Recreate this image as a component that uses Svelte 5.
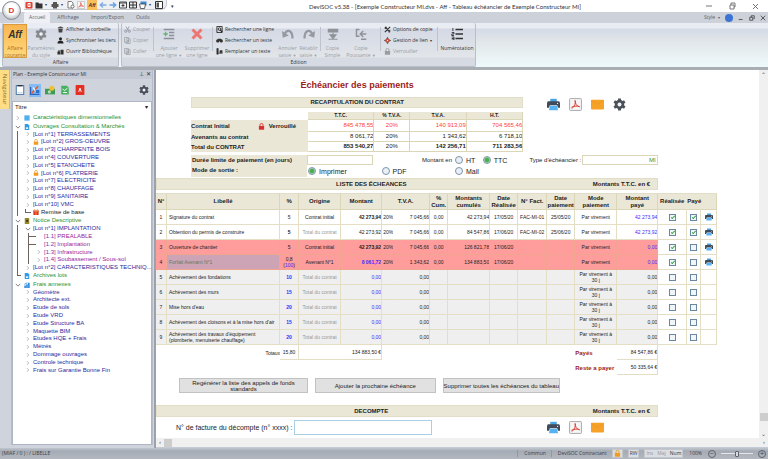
<script>
  const quick = ['app', 'folder', 'printer', 'page', 'pdf', 'aff', 'left', 'right', 'win', 'split', 'tray', 'side'];
  const tabs = ['Accueil', 'Affichage', 'Import/Export', 'Outils'];

  const lots = [
    { t: '[Lot n°1] TERRASSEMENTS' },
    { t: '[Lot n°2] GROS-OEUVRE', lock: true },
    { t: '[Lot n°3] CHARPENTE BOIS' },
    { t: '[Lot n°4] COUVERTURE' },
    { t: '[Lot n°5] ETANCHEITE' },
    { t: '[Lot n°6] PLATRERIE', lock: true },
    { t: '[Lot n°7] ELECTRICITE' },
    { t: '[Lot n°8] CHAUFFAGE' },
    { t: '[Lot n°9] SANITAIRE' },
    { t: '[Lot n°10] VMC' }
  ];
  const notice = [
    { t: '[1.1] PREALABLE', leaf: true },
    { t: '[1.2] Implantation', leaf: true },
    { t: '[1.3] Infrastructure' },
    { t: '[1.4] Soubassement / Sous-sol' }
  ];
  const frais = ['Géomètre', 'Architecte ext.', 'Etude de sols', 'Etude VRD', 'Etude Structure BA', 'Maquette BIM',
    'Etudes HQE + Frais', 'Métrés', 'Dommage ouvrages', 'Controle technique', 'Frais sur Garantie Bonne Fin'];

  const recap = [
    { label: 'Contrat Initial', lock: true, v: ['845 478,55', '20%', '140 913,09', '704 565,46'], cls: 'red' },
    { label: 'Avenants au contrat', v: ['8 061,72', '20%', '1 343,62', '6 718,10'], cls: '' },
    { label: 'Total du CONTRAT', v: ['853 540,27', '20%', '142 256,71', '711 283,56'], cls: 'total' }
  ];

  const cols = [11, 113, 19, 42, 41, 12, 36, 18, 42, 28, 29, 28, 42, 41, 29, 14, 16];
  const full = cols.reduce((a, b) => a + b, 0);

  let rows = $state([
    { n: 1, l: 'Signature du contrat', p: '5', o: 'Contrat initial', m: '42 273,94', b: true, tv: '7 045,66', cu: '42 273,94', d: '17/05/20', f: 'FAC-MI-01', dp: '25/05/20', pay: '42 273,94', r: true, y: true },
    { n: 2, l: 'Obtention du permis de construire', p: '5', pb: true, o: 'Total du contrat', m: '42 273,92', tv: '7 045,66', cu: '84 547,86', d: '17/06/20', f: 'FAC-MI-02', dp: '25/06/20', pay: '42 273,92', r: true, y: true },
    { n: 3, l: 'Ouverture de chantier', p: '5', o: 'Contrat initial', m: '42 273,92', b: true, tv: '7 045,66', cu: '126 821,78', d: '17/06/20', f: '', dp: '', pay: '0,00', r: true, y: false, k: 'late' },
    { n: 4, l: 'Forfait Avenant N°1', p: '0,8', sub: '100', o: 'Avenant N°1', m: '8 061,72', b: true, blue: true, tv: '1 343,62', cu: '134 883,50', d: '17/06/20', f: '', dp: '', pay: '0,00', r: true, y: false, k: 'late', sel: true },
    ...[
      [5, 'Achèvement des fondations', '10'],
      [6, 'Achèvement des murs', '15'],
      [7, "Mise hors d'eau", '20'],
      [8, "Achèvement des cloisons et à la mise hors d'air", '15'],
      [9, "Achèvement des travaux d'équipement (plomberie, menuiserie chauffage)", '20']
    ].map(([n, l, p]) => ({ n, l, p, o: 'Total du contrat', m: '0,00', blue: true, tv: '0,00', cu: '', d: '', f: '', dp: '', pay: '0,00', r: false, y: false, k: 'todo' }))
  ]);

  let sortie = $state('Imprimer');
  let base = $state('TTC');
</script>

{#snippet icon(name)}
  <svg class="ic" viewBox="0 0 16 16" aria-hidden="true">
    {#if name === 'printer'}
      <path d="M4 1h8v4H4z" fill="#4aa3e0" /><path d="M1 4h14l1 2v6h-2.500l-1-3h-9l-1 3H0V6z" fill="#414a56" /><path d="M3.500 9.500h9l1 5.500H2.500z" fill="#58b2f0" /><circle cx="13" cy="6.500" r=".8" fill="#fff" />
    {:else if name === 'pdf'}
      <rect x=".7" y=".7" width="14.600" height="14.600" rx="1" fill="#f6f6f6" stroke="#999" /><path d="M3.500 13C7 10 8.500 6 7.500 3M7.500 3c0 4 2 7 5.500 8M3 11.500c3-1.500 6-2 10-1" fill="none" stroke="#d93a30" stroke-width="1.200" />
    {:else if name === 'mail'}
      <rect y="2" width="16" height="12" rx="1" fill="#f6a127" /><path d="M0 3l8 5 8-5" fill="none" stroke="#f0981c" />
    {:else if name === 'gear'}
      <path d="M8 .5v15M1.500 4.250l13 7.500M14.500 4.250l-13 7.500" stroke="currentColor" stroke-width="3.600" /><circle cx="8" cy="8" r="4" fill="none" stroke="currentColor" stroke-width="3.600" /><circle cx="8" cy="8" r="2.400" fill="#f2f3f6" />
    {:else if name === 'app'}
      <rect x="1" y="2" width="14" height="13" rx="2" fill="#e3402f" /><path d="M11 5H6v6h5M8 8h4" fill="none" stroke="#fff" stroke-width="2" />
    {:else if name === 'folder'}
      <path d="M1 3h6l1 2h7v10H1z" fill="#333" />
    {:else if name === 'print2'}
      <path d="M4 2h8v4H4zM1 6h14v6h-3v3H4v-3H1z" fill="#555" />
    {:else if name === 'page'}
      <path d="M2 1h7l3 3v10H2z" fill="#fff" stroke="#555" stroke-width="1.500" /><circle cx="11" cy="11" r="3" fill="#fff" stroke="#555" stroke-width="1.500" />
    {:else if name === 'left'}
      <path d="M15 8H3M8 3L2.500 8 8 13" fill="none" stroke="#7fabe6" stroke-width="2.800" />
    {:else if name === 'right'}
      <path d="M1 8h12M8 3l5.500 5L8 13" fill="none" stroke="#6a9fe2" stroke-width="2.800" />
    {:else if name === 'win'}
      <path d="M1 2h14v12H1zM1 4h14M8 6v6M5 9h6" fill="none" stroke="#333" stroke-width="1.800" />
    {:else if name === 'split'}
      <path d="M1 2h14v12H1zM8 2v12M1 8h14" fill="none" stroke="#333" stroke-width="2" />
    {:else if name === 'tray'}
      <path d="M3 1h12v8H3z" fill="#3f8ad1" /><path d="M1 6h12l-2 9H3z" fill="#fff" stroke="#333" stroke-width="1.500" />
    {:else if name === 'side'}
      <path d="M1 1h14v14H1z" fill="#fff" stroke="#333" stroke-width="2" /><path d="M3 3h5v10H3z" fill="#555" />
    {:else if name === 'trash'}
      <path d="M2 3h12v2H2zM3 6h10l-1 9H4zM6 1h4v2H6z" fill="#444" />
    {:else if name === 'user'}
      <circle cx="8" cy="4" r="3.500" fill="#222" /><path d="M1 15c0-5 3-7 7-7s7 2 7 7z" fill="#222" />
    {:else if name === 'book'}
      <path d="M1 8h6v7H1zM8 4h7v11H8zM3 5h3v3H3z" fill="#333" />
    {:else if name === 'cut'}
      <path d="M4 1l7 10M12 1L6 11" stroke="#9599a1" stroke-width="2" /><circle cx="4" cy="12" r="2.500" fill="none" stroke="#9599a1" stroke-width="2" /><circle cx="12" cy="12" r="2.500" fill="none" stroke="#9599a1" stroke-width="2" />
    {:else if name === 'copy'}
      <path d="M1 1h9v11H1zM5 4h9v11H5zM7 8h5M7 11h5" fill="#e4e6ea" stroke="#9599a1" stroke-width="1.600" />
    {:else if name === 'addline'}
      <path d="M1 2h14M8 6h7M8 10h7M1 14h14" stroke="#8d9098" stroke-width="2" /><path d="M3.500 5v6M.5 8h6" stroke="#67b578" stroke-width="1.800" />
    {:else if name === 'cross'}
      <path d="M2 2l12 12M14 2L2 14" stroke="#ee7672" stroke-width="4" />
    {:else if name === 'find'}
      <path d="M2 1h12v14H2z" fill="none" stroke="#222" stroke-width="2" /><circle cx="8" cy="7" r="3" fill="none" stroke="#222" stroke-width="2" /><path d="M10 9l4 5" stroke="#222" stroke-width="2.500" />
    {:else if name === 'bino'}
      <circle cx="4" cy="9" r="3.800" fill="#333" /><circle cx="12" cy="9" r="3.800" fill="#333" /><path d="M4 4h8v5H4z" fill="#333" />
    {:else if name === 'replace'}
      <path d="M2 1h3v13H2zM5 12h10M9 6h5v5H9z" fill="#333" stroke="#333" stroke-width="1.500" />
    {:else if name === 'undo'}
      <path d="M3.500 9C5 1.500 14 1 14 14" fill="none" stroke="#9699a0" stroke-width="3" /><path d="M0 4l1 9 8-3z" fill="#9699a0" />
    {:else if name === 'redo'}
      <path d="M12.500 9C11 1.500 2 1 2 14" fill="none" stroke="#9699a0" stroke-width="3" /><path d="M16 4l-1 9-8-3z" fill="#9699a0" />
    {:else if name === 'dup'}
      <path d="M1 1h14v5H1z" fill="#8f9299" /><path d="M8 6v5M4 9h8l-4 5zM2 15h12" stroke="#8f9299" stroke-width="1.500" fill="#8f9299" />
    {:else if name === 'push'}
      <path d="M6 2H2v9h4M15 8H7M11 4L7 8l4 4M8 15h7" fill="none" stroke="#8f9299" stroke-width="2" />
    {:else if name === 'tools'}
      <path d="M2 2l12 12M14 2L2 14M2 6l4-4M10 14l4-4" stroke="#333" stroke-width="2.800" />
    {:else if name === 'link'}
      <path d="M8 0l3 4H5zM8 16l3-4H5zM0 8l4-3v6zM16 8l-4-3v6z" fill="#333" /><circle cx="8" cy="8" r="4.500" fill="#d24a3c" /><circle cx="8" cy="8" r="1.500" fill="#fff" />
    {:else if name === 'lock'}
      <path d="M4.500 8V4.500a3.500 3.500 0 017 0V8" fill="none" stroke="currentColor" stroke-width="2" /><rect x="2" y="7" width="12" height="8.500" rx="1" fill="currentColor" />
    {:else if name === 'num'}
      <path d="M6 2h10M6 8h10M6 14h10" stroke="#333" stroke-width="2.200" /><path d="M2.500 0v4M1 6h3v2H1v2h3M1 12h3v4H1M1 14h3" fill="none" stroke="#333" stroke-width="1.200" />
    {:else if name === 'note'}
      <rect x="2" y="1" width="12" height="14" fill="#fff" stroke="#3c6fa5" stroke-width="1.500" /><path d="M4 1h8" stroke="#334" stroke-width="2.500" /><path d="M4 12h8" stroke="#a8c4de" />
    {:else if name === 'draw'}
      <path d="M1 3v12h14" fill="none" stroke="#2f62c0" stroke-width="2" /><path d="M3 13L13 2" stroke="#e35a2c" stroke-width="2.500" /><path d="M5 4l6 9" stroke="#fff" stroke-width="2" /><path d="M9 8h6v5H9z" fill="#2672cf" />
    {:else if name === 'money'}
      <rect y="6" width="16" height="9" fill="#3f9a55" /><circle cx="11" cy="5" r="4" fill="#f2c02c" /><circle cx="7" cy="11" r="2.500" fill="#bde0b6" />
    {:else if name === 'sheet'}
      <path d="M2 1h9l3 3v11H2z" fill="#46b060" /><path d="M4 6l3 3 5-4M5 12h6" fill="none" stroke="#fff" stroke-width="1.500" />
    {:else if name === 'redbook'}
      <rect x="1" width="14" height="16" rx="1" fill="#e33023" /><path d="M6 11l2-6 2 6" fill="none" stroke="#fff" stroke-width="1.500" />
    {:else if name === 'cube'}
      <rect x="1" y="1" width="14" height="14" fill="#4fb0ef" />
    {:else if name === 'file'}
      <path d="M2 0h8l4 4v12H2z" fill="#2f9be6" /><path d="M5 9h6v4H5z" fill="#fff" />
    {:else if name === 'brown'}
      <path d="M2 0h12v16H2z" fill="#97862a" /><path d="M6 5h5v5H6z" fill="#33300e" />
    {:else if name === 'gift'}
      <path d="M0 4h16v3H0zM1 8h14v8H1z" fill="#e0351f" /><path d="M6.500 4h3v12h-3zM3 0l5 4 5-4v3H3z" fill="#f0832d" />
    {:else if name === 'chart'}
      <path d="M1 9h4v7H1zM6 6h4v10H6zM11 2h4v14h-4z" fill="#1c83d8" /><path d="M1 6l8-4" stroke="#1c83d8" stroke-width="2" />
    {:else if name === 'chev'}
      <path d="M5 3l5 5-5 5" fill="none" stroke="#9a9a9a" stroke-width="1.800" />
    {:else if name === 'down'}
      <path d="M2 5l6 6 6-6" fill="none" stroke="#555" stroke-width="2" />
    {/if}
  </svg>
{/snippet}

{#snippet outputs(gear)}
  <div class="outputs">
    <button aria-label="Imprimer">{@render icon('printer')}</button>
    <button aria-label="PDF">{@render icon('pdf')}</button>
    <button aria-label="Envoyer">{@render icon('mail')}</button>
    {#if gear}<button aria-label="Réglages">{@render icon('gear')}</button>{/if}
  </div>
{/snippet}

{#snippet band(title)}
  <div class="band wide"><h2>{title}</h2><span>Montants T.T.C. en €</span></div>
{/snippet}

<div class="app">
  <header class="titlebar">
    <button class="orb" aria-label="Menu"><b>D</b></button>
    <div class="quick">
      {#each quick as q}
        <button class:on={q === 'aff'} class:drop={['folder', 'printer', 'tray'].includes(q)} aria-label={q}>
          {#if q === 'aff'}<i>Aff</i>{:else}{@render icon(q === 'printer' ? 'print2' : q)}{/if}
        </button>
      {/each}
    </div>
    <span class="more">▾</span>
    <div class="title">DeviSOC v5.38 - [Exemple Constructeur MI.dvs - Aff - Tableau échéancier de Exemple Constructeur MI]</div>
    <div class="winbtns">
      <button aria-label="Réduire"><svg viewBox="0 0 8 8"><path d="M1 4h6" /></svg></button>
      <button aria-label="Restaurer"><svg viewBox="0 0 8 8"><path d="M2 3h4v4H2zM3 3V1h4v4H6" /></svg></button>
      <button aria-label="Fermer"><svg viewBox="0 0 8 8"><path d="M2 2l5 5M7 2L2 7" /></svg></button>
    </div>
  </header>

  <nav class="tabs">
    {#each tabs as t, i}<button class:active={i === 0}>{t}</button>{/each}
    <div class="mdi">
      <button>Style <small>▾</small></button>
      <span class="info"></span>
      <button aria-label="Réduire"><svg viewBox="0 0 8 8"><path d="M1 6h5" /></svg></button>
      <button aria-label="Restaurer"><svg viewBox="0 0 8 8"><path d="M1 3h4v4H1zM3 3V1h4v4H6" /></svg></button>
      <button aria-label="Fermer"><svg viewBox="0 0 8 8"><path d="M1 1l6 6M7 1L1 7" /></svg></button>
    </div>
  </nav>

  <div class="ribbon">
    <section class="group">
      <div class="tools">
        <button class="big current"><i>Aff</i><span>Affaire<br />courante</span></button>
        <button class="big off mid">{@render icon('gear')}<span>Paramètres<br />du style</span></button>
        <div class="stack tiers">
          <button>{@render icon('trash')}Afficher la corbeille</button>
          <button>{@render icon('user')}Synchroniser les tiers</button>
          <button>{@render icon('book')}Ouvrir Bibliothèque</button>
        </div>
      </div>
      <h3>Affaire</h3>
    </section>
    <section class="group">
      <div class="tools">
        <div class="stack off first">
          <button>{@render icon('cut')}Couper</button>
          <button>{@render icon('copy')}Copier</button>
          <button>{@render icon('copy')}Coller</button>
        </div>
        <hr />
        <button class="big off mid">{@render icon('addline')}<span>Ajouter<br />une ligne <em>▼</em></span></button>
        <button class="big off mid">{@render icon('cross')}<span>Supprimer<br />une ligne</span></button>
        <hr />
        <div class="stack tiers">
          <button>{@render icon('find')}Rechercher une ligne</button>
          <button>{@render icon('bino')}Rechercher un texte</button>
          <button>{@render icon('replace')}Remplacer un texte</button>
        </div>
        <button class="big off small">{@render icon('undo')}<span>Annuler<br />saisie <em>▼</em></span></button>
        <button class="big off small">{@render icon('redo')}<span>Rétablir<br />saisie <em>▼</em></span></button>
        <hr />
        <button class="big off small">{@render icon('dup')}<span>Copie<br />Simple</span></button>
        <button class="big off large">{@render icon('push')}<span>Copie<br />Poussante <em>▼</em></span></button>
        <hr />
        <div class="stack options">
          <button>{@render icon('tools')}Options de copie</button>
          <button>{@render icon('link')}Gestion de lien <em>▾</em></button>
          <button class="off">{@render icon('lock')}Verrouiller</button>
        </div>
        <hr />
        <button class="big large">{@render icon('num')}<span>Numérotation</span></button>
      </div>
      <h3>Edition</h3>
    </section>
  </div>

  <main>
    <aside>
      <button class="navtab">Navigateur</button>
      <div class="panel">
        <div class="ptitle"><span>Plan - Exemple Constructeur MI</span><span class="pin">⊥ ✕</span></div>
        <div class="pbar">
          {#each ['note', 'draw', 'money', 'sheet', 'redbook'] as p, i}
            <button class:on={i === 1} aria-label={p}>{@render icon(p)}</button>
          {/each}
          <button class="cfg" aria-label="Réglages">{@render icon('gear')}</button>
        </div>
        <div class="tree">
          <div class="thead"><span>Titre</span><span>▾</span></div>
          <ul>
            <li class="root">{@render icon('chev')}{@render icon('cube')}<span>Caractéristiques dimensionnelles</span></li>
            <li class="root open">{@render icon('down')}{@render icon('file')}<span>Ouvrages Consultation & Marchés</span></li>
            <li>
              <ul class="kids line">
                {#each lots as l}
                  <li class="row">{@render icon('chev')}{#if l.lock}<span class="gold">{@render icon('lock')}</span>{/if}<span>{l.t}</span></li>
                {/each}
                <li class="row black"><span class="elbow"></span>{@render icon('gift')}<span>Remise de base</span></li>
              </ul>
            </li>
            <li class="root open">{@render icon('down')}{@render icon('brown')}<span>Notice Descriptive</span></li>
            <li>
              <ul class="kids line">
                <li class="row">{@render icon('down')}<span>[Lot n°1] IMPLANTATION</span></li>
                <li>
                  <ul class="sub line">
                    {#each notice as n}
                      <li class="row purple">{#if n.leaf}<span class="tick"></span>{:else}{@render icon('chev')}{/if}<span>{n.t}</span></li>
                    {/each}
                  </ul>
                </li>
                <li class="row">{@render icon('chev')}<span>[Lot n°2] CARACTERISTIQUES TECHNIQ...</span></li>
              </ul>
            </li>
            <li class="root"><span class="elbow last"></span>{@render icon('file')}<span>Archives lots</span></li>
            <li class="root open">{@render icon('down')}{@render icon('chart')}<span>Frais annexes</span></li>
            <li>
              <ul class="kids">
                {#each frais as f}<li class="row">{@render icon('chev')}<span>{f}</span></li>{/each}
              </ul>
            </li>
          </ul>
        </div>
      </div>
    </aside>

    <div class="view">
      <div class="doc">
        <div class="top">
          <div class="recap">
            <h1>Échéancier des paiements</h1>
            <div class="band"><h2>RECAPITULATION DU CONTRAT</h2></div>
            <table class="sum">
              <colgroup><col style="width:35.2%" /><col style="width:20%" /><col style="width:10.8%" /><col style="width:17%" /><col style="width:17%" /></colgroup>
              <thead><tr><td></td><th>T.T.C.</th><th>% T.V.A.</th><th>T.V.A.</th><th>H.T.</th></tr></thead>
              <tbody>
                {#each recap as r}
                  <tr class={r.cls}>
                    <th scope="row"><div><span>{r.label}</span>{#if r.lock}<span class="locked">{@render icon('lock')}<span>Verrouillé</span></span>{/if}</div></th>
                    {#each r.v as v, i}<td class:pct={i === 1}>{v}</td>{/each}
                  </tr>
                {/each}
              </tbody>
            </table>
          </div>
          {@render outputs(true)}
        </div>

        <div class="opts">
          <label class="lab" for="duree">Durée limite de paiement (en jours)</label>
          <input id="duree" class="field" type="text" />
          <span class="right">Montant en</span>
          <label class="radio"><input type="radio" name="base" value="HT" bind:group={base} />HT</label>
          <label class="radio"><input type="radio" name="base" value="TTC" bind:group={base} />TTC</label>
          <label for="type" class="type">Type d'échéancier :</label>
          <input id="type" class="field green" type="text" value="MI" />
          <span class="lab">Mode de sortie :</span>
          {#each ['Imprimer', 'PDF', 'Mail'] as s}
            <label class="radio"><input type="radio" name="sortie" value={s} bind:group={sortie} />{s}</label>
          {/each}
        </div>

        {@render band('LISTE DES ÉCHEANCES')}

        <table class="list">
          <colgroup>{#each cols as c}<col style="width:{(c / full) * 100}%" />{/each}</colgroup>
          <thead>
            <tr>
              <th>N°</th><th>Libellé</th><th>%</th><th>Origine</th><th>Montant</th><th colspan="2">T.V.A.</th><th>%<br />Cum.</th>
              <th>Montants<br />cumulés</th><th>Date<br />Réalisée</th><th>N° Fact.</th><th>Date<br />paiement</th><th>Mode<br />paiement</th><th>Montant<br />payé</th>
              <th class="nb">Réalisée</th><th class="nb">Payé</th><th></th>
            </tr>
          </thead>
          <tbody>
            {#each rows as r}
              <tr class={r.k}>
                <td class="c">{r.n}</td>
                <td class="lib" class:sel={r.sel}>{r.l}</td>
                <td class="c" class:bb={r.k === 'todo'} class:b={r.pb}>{r.p}{#if r.sub}<br />(<span class="blue">{r.sub}</span>){/if}</td>
                <td class="c" class:dim={r.o === 'Total du contrat'}>{r.o}</td>
                <td class="n" class:b={r.b} class:blue={r.blue}>{r.m}</td>
                <td class="rate">{r.k === 'todo' ? '' : '20%'}</td>
                <td class="n">{r.tv}</td>
                <td class="c">{r.k === 'todo' ? '' : '0,00'}</td>
                <td class="n">{r.cu}</td>
                <td class="c">{r.d}</td>
                <td class="c">{r.f}</td>
                <td class="c">{r.dp}</td>
                <td class="c">Par virement{#if r.k === 'todo'}{' à'}<br />30 j{/if}</td>
                <td class="n" class:blue={r.k !== 'todo'}>{r.pay}</td>
                <td class="c w"><input type="checkbox" aria-label="Réalisée {r.n}" bind:checked={r.r} /></td>
                <td class="c w"><input type="checkbox" aria-label="Payé {r.n}" bind:checked={r.y} /></td>
                <td class="c w">{#if r.k !== 'todo'}<button class="prt" aria-label="Imprimer {r.n}">{@render icon('printer')}</button>{/if}</td>
              </tr>
            {/each}
          </tbody>
          <tfoot>
            <tr>
              <td colspan="2" class="n">Totaux</td><td class="c box">15,80</td><td colspan="2" class="n box">134 883,50 €</td>
              <td colspan="7"></td><th>Payés</th><td class="n box">84 547,86 €</td><td colspan="3"></td>
            </tr>
            <tr><td colspan="12"></td><th>Reste a payer</th><td class="n box">50 335,64 €</td><td colspan="3"></td></tr>
          </tfoot>
        </table>

        <div class="actions">
          <button>Regénérer la liste des appels de fonds standards</button>
          <button>Ajouter la prochaine échéance</button>
          <button>Supprimer toutes les échéances du tableau</button>
        </div>

        {@render band('DECOMPTE')}

        <div class="decompte">
          <label for="fact">N° de facture du décompte (n° xxxx) :</label>
          <input id="fact" type="text" />
          {@render outputs(false)}
        </div>
      </div>
      <div class="vbar"><span>⌃</span><i></i><span>⌄</span></div>
      <div class="hbar"><span>‹</span><i></i><span class="end">›</span></div>
    </div>
  </main>

  <footer>
    <span class="path">(MIAF / 0 ) : / LIBELLE</span>
    <span class="cell">Commun</span>
    <span class="cell">DeviSOC Contractant</span>
    <span class="chip gold">{@render icon('lock')}</span>
    <span class="chip">RW</span>
    <span class="chip keys"><span>Ins</span><span>Maj</span><b>Num</b></span>
    <span class="zoom">100%</span>
    <button aria-label="Zoom arrière">−</button>
    <input type="range" aria-label="Zoom" />
    <button aria-label="Zoom avant">+</button>
  </footer>
</div>

<style>
  :global(body) { margin: 0; }
  .app { display: flex; flex-direction: column; height: 100vh; overflow: hidden; background: #cfd3dc; font: 5px/7px 'Open Sans', 'Noto Sans', sans-serif; color: #333; }
  .app *, .app *::after { box-sizing: border-box; }
  button { font: inherit; color: inherit; background: none; border: 0; padding: 0; display: flex; align-items: center; justify-content: center; }
  h1, h2, h3 { margin: 0; font-size: inherit; }
  ul { list-style: none; margin: 0; padding: 0; }
  .ic { width: 7px; height: 7px; flex: none; display: block; }

  .titlebar { position: relative; display: flex; align-items: center; height: 12px; flex: none; background: #fff; padding-left: 24px; }
  .orb { position: absolute; left: 2px; top: 1px; width: 19px; height: 19px; border-radius: 50%; background: radial-gradient(circle at 50% 40%, #fff 40%, #c3c6cc 75%, #8f939b); border: 1px solid #868a92; z-index: 2; }
  .orb b { color: #e03a2a; font: bold 8px 'Liberation Sans', sans-serif; }
  .quick { display: flex; align-items: center; height: 10px; padding: 0 3px 0 1px; border: 1px solid #c5c8ce; border-top: 0; border-left: 0; border-radius: 0 0 6px 0; background: #eef0f3; gap: 2px; align-self: flex-start; }
  .quick .ic { width: 8px; height: 8px; }
  .quick .drop::after { content: '▾'; font-size: 4px; width: 6px; }
  .quick .on { background: #fbbf5a; height: 10px; width: 10px; font: bold 5px 'Liberation Sans', sans-serif; }
  .more { margin-left: 4px; }
  .title { flex: 1; padding-left: 11px; text-align: center; white-space: nowrap; font: 6px/7px Lato, sans-serif; }
  .winbtns { display: flex; gap: 15px; padding-right: 9px; }
  .winbtns svg, .mdi svg { width: 8px; height: 8px; fill: none; stroke: #777; stroke-width: 1; display: block; }

  .tabs { display: flex; height: 11px; flex: none; padding-left: 24px; background: #cdd1da; color: #5a5e66; }
  .tabs > button { padding: 0 5px; margin-right: 2px; }
  .tabs > button.active { background: #eef0f5; border-radius: 2px 2px 0 0; }
  .mdi { margin-left: auto; display: flex; align-items: center; gap: 5px; padding-right: 2px; }
  .mdi button:first-child { margin-right: 0; }
  .mdi small { font-size: 4px; margin-left: 3px; }
  .mdi svg { stroke: #333; width: 6px; height: 6px; }
  .info { width: 8px; height: 8px; border-radius: 50%; background: #3b74d4; }

  .ribbon { display: flex; gap: 2px; height: 44px; flex: none; padding: 0 2px; background: linear-gradient(#e9ecf2 0 5px, #d4dae7 6px, #e3e8ea 20px, #edf8fa 42px); }
  .group { display: flex; flex-direction: column; border: 1px solid #b9bec8; border-top: 0; border-radius: 2px; background: linear-gradient(#e9ecf2 0 5px, #d4d9e5 6px, #e2e5e9 34px, #d6dae3 35px); }
  .group h3 { font-weight: normal; text-align: center; line-height: 8px; }
  .tools { display: flex; height: 35px; padding-top: 1px; align-items: stretch; }
  .tools hr { border: 0; border-left: 1px solid #bfc3cc; margin: 3px 1px 7px; }
  .big { flex-direction: column; justify-content: flex-start; padding-top: 4px; gap: 5px; text-align: center; white-space: nowrap; }
  .big .ic { width: 12px; height: 12px; }
  .big em, .stack em { font-style: normal; font-size: 4px; }
  .off { color: #9a9da4; }
  .current { width: 24px; background: linear-gradient(#f8b552, #fcc866 50%, #ffd97f); border: 1px solid #d89b3f; color: #ab6a1f; }
  .current i { font: italic bold 10px/11px 'Liberation Sans', sans-serif; color: #333; }
  .mid { width: 28px; }
  .mid .ic { color: #85888f; }
  .small { width: 21px; }
  .large { width: 36px; }
  .stack { display: flex; flex-direction: column; justify-content: space-between; align-items: flex-start; padding: 2px 2px 3px; white-space: nowrap; }
  .stack button { gap: 2px; }
  .first { width: 30px; }
  .tiers { width: 63px; }
  .options { width: 54px; }

  main { display: flex; flex: 1; min-height: 0; border-top: 3px solid #a9adb4; }
  aside { display: flex; width: 156px; flex: none; border-right: 2px solid #9ba2ad; padding-right: 1px; }
  .navtab { width: 10px; height: 39px; background: #ffdd85; writing-mode: vertical-rl; color: #8b6a28; border-right: 1px solid #d9b968; font-size: 6px; }
  .panel { flex: 1; min-width: 0; margin: 0 0 3px 1px; display: flex; flex-direction: column; border: 1px solid #b6bcc8; border-width: 0 1px; }
  .ptitle { display: flex; justify-content: space-between; line-height: 9px; background: #c5cad5; padding: 0 1px; }
  .pin { font-size: 6px; }
  .pbar { display: flex; height: 22px; align-items: center; gap: 3px; padding: 0 2px; color: #48505c; }
  .pbar .ic { width: 10px; height: 10px; }
  .pbar button { width: 12px; height: 13px; }
  .pbar .on { background: #84bdf5; }
  .pbar .cfg { margin-left: auto; }
  .tree { flex: 1; background: #fff; border: 1px solid #aeb6c4; font-family: 'Liberation Sans', Arial, sans-serif; font-size: 6px; line-height: 1.3; }
  .thead { display: flex; justify-content: space-between; padding: 2px 3px 3px 2px; line-height: 7px; color: #222; }
  .tree .ic { width: 6px; height: 6px; }
  .root, .row { display: flex; align-items: center; white-space: nowrap; }
  .root { color: #1f9130; gap: 3px; padding-left: 2px; }
  .open { padding-top: 1px; }
  .kids { margin-left: 4px; padding-left: 7px; border-left: 1px solid transparent; color: #2a2a9c; }
  .row { gap: 2px; }
  .line { border-left: 1px solid #6d635c; }
  .sub { margin-left: 3px; padding-left: 7px; }
  .purple { color: #93269b; }
  .black { color: #222; }
  .gold { color: #f39a1d; }
  .elbow { width: 6px; height: 4px; border: solid #6d635c; border-width: 0 0 1px 1px; align-self: flex-start; }
  .last { margin-left: 2px; width: 4px; }
  .tick { width: 7px; margin-left: -7px; margin-right: 6px; border-top: 1px solid #6d635c; }

  .view { flex: 1; min-width: 0; display: grid; grid-template: 1fr 9px / 1fr 9px; background: #fff; border-bottom: 1px solid #c5cbd6; font-family: 'Liberation Sans', Arial, sans-serif; font-size: 6px; color: #222; }
  .doc { min-width: 0; overflow: hidden; }
  .top { display: flex; padding-left: 35px; }
  .recap { width: 58.500%; }
  h1 { font-size: 9px; line-height: 24px; padding-top: 3px; text-align: center; color: #9b1c1c; }
  .band { background: #ebe7d7; border: 1px solid #e2ddc6; line-height: 9px; text-align: center; font-weight: bold; color: #222; }
  .wide { display: grid; grid-template-columns: 430fr 72fr; width: 83.300%; line-height: 10px; }
  .outputs { display: flex; gap: 9px; align-items: center; }
  .top .outputs { padding: 28px 0 0 24px; align-self: flex-start; color: #4b5159; }
  .outputs .ic { width: 13px; height: 13px; }

  table { border-collapse: separate; border-spacing: 0; table-layout: fixed; }
  td, th { padding: 0; overflow: hidden; }
  .sum { width: 100%; margin-top: 4px; }
  .sum thead th { background: #ebe7d7; height: 8px; font-size: 5px; line-height: 7px; border-right: 1px solid #dcd6b9; border-bottom: 1px solid #dcd6b9; }
  .sum tbody th { text-align: left; background: #ebe7d7; }
  .sum tbody th div { display: flex; gap: 28px; }
  .sum tbody td { text-align: right; height: 10px; border-right: 1px solid #dcd6b9; border-bottom: 1px solid #dcd6b9; white-space: nowrap; }
  .sum tbody td.pct { text-align: center; font-weight: normal; }
  .sum .red td { height: 12px; color: #ff3b3b; }
  .sum .total td { font-weight: bold; }
  .locked { display: flex; gap: 4px; }
  .locked .ic { color: #d93131; }

  .opts { margin: 3px 0 1px 35px; width: 77.400%; display: grid; grid-template: 10px 12px / 117fr 74fr 74fr 28fr 48fr 50fr 76fr; align-items: center; }
  .lab { background: #ebe7d7; align-self: stretch; font-weight: bold; padding-left: 1px; line-height: 10px; white-space: nowrap; }
  .field { height: 10px; width: 66px; border: 1px solid #dcd6b9; background: #fff; padding: 0 1px; font: inherit; }
  .field.green { width: 100%; text-align: right; color: #1f9130; }
  .right { text-align: right; padding-right: 2px; white-space: nowrap; }
  .type { white-space: nowrap; text-align: right; padding-right: 1px; }
  .radio { display: flex; align-items: center; gap: 3px; padding-left: 1px; font-size: 7px; }
  input[type='radio'] { appearance: none; width: 8px; height: 8px; margin: 0; border: 1px solid #7d95aa; border-radius: 50%; background: #eaf0f5; flex: none; }
  input[type='radio']:checked { background: radial-gradient(circle, #4cae54 45%, #dcecdc 75%); }

  .list { width: 93.100%; margin-top: 3px; font-size: 5px; line-height: 6px; }
  .list thead th { height: 17px; background: #ebe7d7; font-size: 6px; line-height: 7px; border-right: 1px solid #dcd6b9; border-bottom: 1px solid #dcd6b9; border-top: 1px solid #e2ddc6; }
  .list thead .nb { border-right-color: transparent; overflow: visible; }
  .list tbody td { height: 15px; border-right: 1px solid #e3dec4; border-bottom: 1px solid #e3dec4; }
  .list .c { text-align: center; white-space: nowrap; }
  .list .n { text-align: right; white-space: nowrap; }
  .list .lib { padding-left: 2px; }
  .list tbody .rate { border-right-color: transparent; padding-left: 1px; }
  .list .late td { background: #ff9c9c; border-color: #f0a58f; }
  .list .todo td { background: #efefef; }
  .list tbody td.w { background: #fff; border-color: #e3dec4; }
  .list .late .sel { background: #cda4b5; color: #5c7a68; }
  .b { font-weight: bold; }
  .bb { font-weight: bold; color: #3a2cff; }
  .blue { color: #3a2cff; }
  .dim { color: #999; }
  tfoot td, tfoot th { height: 15px; }
  tfoot th { text-align: left; color: #9b1c1c; font-size: 6px; white-space: nowrap; overflow: visible; }
  tfoot .box { border: solid #e3dec4; border-width: 0 1px 1px 0; }
  input[type='checkbox'] { appearance: none; width: 7px; height: 7px; margin: 0; border: 1px solid #6b87a0; background: #f0f5f8; display: inline-block; vertical-align: middle; position: relative; }
  input[type='checkbox']:checked::after { content: ''; position: absolute; left: 1px; top: 1px; width: 4px; height: 2px; border: solid #35a844; border-width: 0 0 1px 1px; transform: rotate(-45deg); }
  .prt { display: inline-flex; vertical-align: middle; }
  .prt .ic { width: 8px; height: 8px; }

  .actions { display: flex; gap: 7px; padding-left: 23px; margin: 3px 0 12px; width: 67%; }
  .actions button { flex: 118; height: 15px; background: #e1e1e1; border: 1px solid #c2c2c2; line-height: 6px; padding: 0 10px; color: #222; }
  .actions button:first-child { flex: 128; }
  .actions button:last-child { padding: 0; white-space: nowrap; }
  .decompte { display: flex; align-items: center; padding: 3px 0 0 20px; font-size: 7px; }
  .decompte label { width: 118px; white-space: nowrap; }
  .decompte input { width: 138px; height: 15px; border: 1px solid #a9cfe8; margin-right: 115px; font: inherit; padding: 0 2px; }

  .vbar, .hbar { background: #f0f0f0; display: flex; align-items: center; color: #555; }
  .vbar { flex-direction: column; padding-top: 2px; }
  .vbar i { width: 8px; height: 8px; background: #cdcdcd; margin-top: auto; margin-bottom: 10px; }
  .hbar { grid-column: 1 / 3; padding: 0 3px; gap: 3px; }
  .hbar i { width: 8px; height: 8px; background: #cdcdcd; }
  .end { margin-left: auto; }

  footer { display: flex; align-items: center; height: 11px; flex: none; padding: 0 2px; gap: 5px; background: linear-gradient(#c1c6ce, #a5abb4 3px, #b3b8c0); color: #3c4048; white-space: nowrap; }
  .path { flex: 1; }
  .cell { border-left: 1px solid #9298a2; padding-left: 6px; }
  .chip { background: #dadde2; border: 1px solid #c2c6cd; height: 9px; padding: 0 1px; display: flex; align-items: center; }
  .keys { gap: 4px; color: #9296a0; }
  .keys b { font-weight: normal; color: #333; }
  .zoom { padding: 0 1px; }
  footer button { width: 8px; height: 8px; border: 1px solid #5f646d; border-radius: 50%; font-size: 7px; line-height: 6px; }
  input[type='range'] { appearance: none; width: 32px; height: 7px; margin: 0; background: linear-gradient(#0000 3px, #e4e6ea 3px 4px, #0000 4px); }
  input[type='range']::-webkit-slider-thumb { appearance: none; width: 4px; height: 6px; background: #d8dbe0; border: 1px solid #5f646d; border-radius: 1px; }
</style>
